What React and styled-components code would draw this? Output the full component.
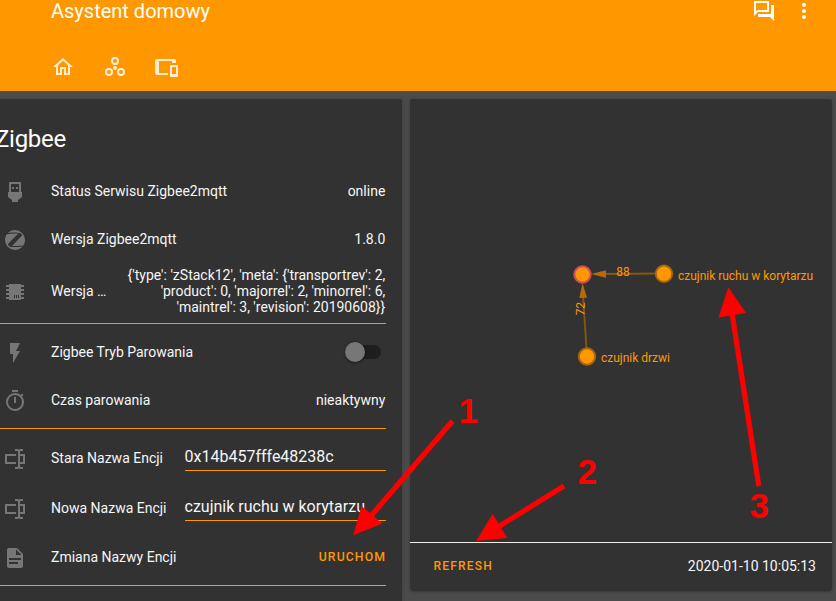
import React from 'react';
import styled, { createGlobalStyle } from 'styled-components';

const GlobalStyle = createGlobalStyle`
  * { box-sizing: border-box; }
  body { margin: 0; overflow: hidden; background: #4b4b4b; font-family: Roboto, "Noto Sans", sans-serif; color: #fff; }
`;

const Page = styled.div`
  position: relative;
  display: flex;
  flex-direction: column;
  width: 836px;
  height: 601px;
  overflow: hidden;
  background: #4b4b4b;
`;

const Header = styled.header`
  display: flex;
  flex-direction: column;
  justify-content: space-between;
  flex: none;
  height: 91px;
  background: #ff9800;
`;

const Toolbar = styled.div`
  display: flex;
  align-items: center;
  height: 23px;
  padding: 0 20px 0 51px;
`;

const AppTitle = styled.h1`
  flex: 1;
  margin: 0;
  font-size: 20px;
  font-weight: 400;
  line-height: 23px;
`;

const Actions = styled.div`
  display: flex;
  gap: 16px;
  margin-bottom: 1px;
`;

const Tabs = styled.nav`
  display: flex;
  align-items: center;
  gap: 28px;
  height: 48px;
  padding: 0 51px;
  color: rgba(255, 255, 255, 0.82);
`;

const Glyph = styled.svg`
  display: block;
  flex: none;
  width: 24px;
  height: 24px;
  fill: currentColor;
`;

const Columns = styled.main`
  display: flex;
  align-items: flex-start;
  gap: 8px;
  padding-top: 8px;
`;

const Card = styled.section`
  flex: none;
  background: #323232;
  border-radius: 2px;
  box-shadow: 0 2px 2px rgba(0, 0, 0, 0.14), 0 1px 5px rgba(0, 0, 0, 0.12), 0 3px 1px -2px rgba(0, 0, 0, 0.2);
`;

const EntitiesCard = styled(Card)`
  width: 423px;
  height: 520px;
  margin-left: -21px;
  padding: 0 16px;
`;

const CardTitle = styled.h2`
  margin: 0;
  padding: 20px 0 12px;
  font-size: 24px;
  font-weight: 400;
  line-height: 40px;
  letter-spacing: -0.29px;
`;

const EntityList = styled.div`
  display: flex;
  flex-direction: column;
  gap: 8px;
`;

const Row = styled.div`
  display: flex;
  align-items: center;
  height: ${(p) => p.$height || 40}px;
  font-size: 14px;
  line-height: 16px;
  color: #f6f6f6;
`;

const StateIcon = styled.div`
  display: flex;
  align-items: center;
  justify-content: center;
  flex: none;
  width: 40px;
  height: 40px;
  margin-right: 16px;
  padding-top: 2px;
  color: #767676;
`;

const Label = styled.div`
  flex: 1;
  white-space: nowrap;
`;

const State = styled.div`
  padding-right: 0.7px;
  text-align: right;
  white-space: pre-line;
`;

const Divider = styled.hr`
  flex: none;
  width: 100%;
  height: 1px;
  margin: 0;
  border: 0;
  background: #ff9800;
`;

const Input = styled.div`
  width: 201.5px;
  height: 27px;
  border-bottom: 1px solid #ff9800;
  font-size: 16px;
  line-height: 25px;
  margin-bottom: 1px;
  white-space: nowrap;
`;

const Switch = styled.div`
  display: flex;
  align-items: center;
  width: 36px;
  height: 14px;
  margin-right: 5px;
  border-radius: 7px;
  background: #1f1f1f;
`;

const Knob = styled.span`
  width: 20px;
  height: 20px;
  border-radius: 50%;
  background: #777;
  box-shadow: 0 1px 3px rgba(0, 0, 0, 0.5);
`;

const Action = styled.span`
  color: #ff9800;
  font-size: ${(p) => p.$size}px;
  font-weight: 500;
  letter-spacing: ${(p) => p.$spacing}px;
  line-height: 16px;
`;

const MapCard = styled(Card)`
  display: flex;
  flex-direction: column;
  width: 422px;
  height: 491px;
`;

const Network = styled.svg`
  display: block;
  flex: none;
  width: 422px;
  height: 443px;
  font-family: Roboto, sans-serif;
  font-size: 12px;
  fill: #ff9800;
`;

const MapFooter = styled.footer`
  display: flex;
  align-items: center;
  justify-content: space-between;
  height: 48px;
  padding: 0 16px 1px 23.5px;
  border-top: 1px solid #eee;
  font-size: 14px;
  color: #f6f6f6;
`;

const Annotations = styled.svg`
  position: absolute;
  inset: 0;
  width: 836px;
  height: 601px;
  pointer-events: none;
  fill: #f00;
  stroke: none;
  font: bold 35px "Liberation Sans", sans-serif;
`;

const paths = {
  home: 'M12 5.69L17 10.19V18H15V12H9V18H7V10.19L12 5.69M12 3L2 12H5V20H11V14H13V20H19V12H22',
  devices: 'M2,4H19A2,2 0 0,1 21,6V8H17V6H4V18H13V20H2A2,2 0 0,1 0,18V6A2,2 0 0,1 2,4M16,10H22A1,1 0 0,1 23,11V21A1,1 0 0,1 22,22H16A1,1 0 0,1 15,21V11A1,1 0 0,1 16,10M17,12V19H21V12H17Z',
  forum: 'M15,4V11H5.17L4,12.17V4H15M16,2H3A1,1 0 0,0 2,3V17L6,13H16A1,1 0 0,0 17,12V3A1,1 0 0,0 16,2M21,6H19V15H6V17A1,1 0 0,0 7,18H18L22,22V7A1,1 0 0,0 21,6Z',
  more: 'M12,16A2,2 0 1,1 12,20A2,2 0 1,1 12,16M12,10A2,2 0 1,1 12,14A2,2 0 1,1 12,10M12,4A2,2 0 1,1 12,8A2,2 0 1,1 12,4Z',
  usb: 'M7 2H17A1 1 0 0 1 18 3V12H19V17L15 20V22H9V20L5 17V12H6V3A1 1 0 0 1 7 2M8 4V12H16V4H8M9 7H11V9H9V7M13 7H15V9H13V7Z',
  zigbee: 'M4.06,6.15C3.97,6.17 3.88,6.22 3.8,6.28C2.66,7.9 2,9.87 2,12A10,10 0 0,0 12,22C15,22 17.68,20.68 19.5,18.6L17,18.85C14.25,19.15 11.45,19.19 8.66,18.96C7.95,18.94 7.24,18.76 6.59,18.45C5.73,18.06 5.15,17.23 5.07,16.29C5.06,16.13 5.12,16 5.23,15.87L7.42,13.6L15.1,5.7V5.6H10.84C8.57,5.64 6.31,5.82 4.06,6.15M20.17,17.5C20.26,17.47 20.35,17.44 20.43,17.39C21.42,15.83 22,14 22,12A10,10 0 0,0 12,2C9.22,2 6.7,3.13 4.89,4.97H5.17C8.28,4.57 11.43,4.47 14.56,4.65C15.5,4.64 16.45,4.82 17.33,5.17C18.25,5.53 18.89,6.38 19,7.37C19,7.53 18.93,7.7 18.82,7.82L9.71,17.19L9,17.95V18.06H13.14C15.5,18 17.84,17.81 20.17,17.5Z',
  chip: 'M6,4H18V5H21V7H18V9H21V11H18V13H21V15H18V17H21V19H18V20H6V19H3V17H6V15H3V13H6V11H3V9H6V7H3V5H6V4M11,15V18H12V15H11M13,15V18H14V15H13M15,15V18H16V15H15Z',
  flash: 'M7,2V13H10V22L17,10H13L17,2H7Z',
  timer: 'M12,20A7,7 0 0,1 5,13A7,7 0 0,1 12,6A7,7 0 0,1 19,13A7,7 0 0,1 12,20M19.03,7.39L20.45,5.97C20,5.46 19.55,5 19.04,4.56L17.62,6C16.07,4.74 14.12,4 12,4A9,9 0 0,0 3,13A9,9 0 0,0 12,22C17,22 21,17.97 21,13C21,10.88 20.26,8.93 19.03,7.39M11,14H13V8H11M15,1H9V3H15V1Z',
  textbox: 'M17,7H22V17H17V19A1,1 0 0,0 18,20H20V22H17.5C16.95,22 16,21.55 16,21C16,21.55 15.05,22 14.5,22H12V20H14A1,1 0 0,0 15,19V5A1,1 0 0,0 14,4H12V2H14.5C15.05,2 16,2.45 16,3C16,2.45 16.95,2 17.5,2H20V4H18A1,1 0 0,0 17,5V7M2,7H13V9H4V15H13V17H2V7M20,15V9H17V15H20Z',
  document: 'M13,9H18.5L13,3.5V9M6,2H14L20,8V20A2,2 0 0,1 18,22H6C4.89,22 4,21.1 4,20V4C4,2.89 4.89,2 6,2M15,18V16H6V18H15M18,14V12H6V14H18Z',
};

function Icon({ name }) {
  return (
    <Glyph viewBox="0 0 24 24">
      <path fillRule={name === 'usb' ? 'evenodd' : undefined} d={paths[name]} />
    </Glyph>
  );
}

function NodesIcon() {
  return (
    <Glyph viewBox="0 0 24 24">
      <g fill="none" stroke="currentColor" strokeWidth="2">
        <circle cx="12" cy="6" r="3" />
        <circle cx="6" cy="17" r="3" />
        <circle cx="18" cy="17" r="3" />
      </g>
      <circle cx="12" cy="13" r="2" />
    </Glyph>
  );
}

function Entity({ icon, label, height, children }) {
  return (
    <Row $height={height}>
      <StateIcon><Icon name={icon} /></StateIcon>
      <Label>{label}</Label>
      {children}
    </Row>
  );
}

function NetworkMap() {
  return (
    <Network viewBox="410 99 422 443">
      <g stroke="#8a5711" strokeWidth="1.8">
        <path d="M664 273.5L598 274" />
        <path d="M587 356L583 296" />
      </g>
      <path fill="#b8690b" d="M591 274L606 270.2V277.8Z" />
      <path fill="#b8690b" d="M582.5 283L579.3 298L587 297.8Z" />
      <circle cx="582.5" cy="274.5" r="8.2" stroke="#c94d5b" strokeWidth="2" />
      <circle cx="664" cy="273.8" r="8.2" stroke="#a8660c" strokeWidth="2" />
      <circle cx="587" cy="356.5" r="8.2" stroke="#a8660c" strokeWidth="2" />
      <text x="623" y="276" textAnchor="middle">88</text>
      <text transform="translate(584.5 309) rotate(-87)" textAnchor="middle">72</text>
      <text x="678" y="280" textLength="135">czujnik ruchu w korytarzu</text>
      <text x="601" y="362" textLength="69">czujnik drzwi</text>
    </Network>
  );
}

function Callouts() {
  return (
    <Annotations viewBox="0 0 836 601">
      <g stroke="#f00" strokeWidth="5.2">
        <path d="M452.5 421L370 517" />
        <path d="M564 486L498 527" />
        <path d="M758.8 486L732 313" />
      </g>
      <path d="M353.3 535.3L361.5 506L382.3 523.5Z" />
      <path d="M476 541L492.7 514L507.3 538Z" />
      <path d="M728.3 287.3L718.5 317.6L746.2 313Z" />
      <text x="458.5" y="422.5">1</text>
      <text x="577.5" y="483.5">2</text>
      <text x="749.5" y="517.5">3</text>
    </Annotations>
  );
}

export default function App() {
  return (
    <Page>
      <GlobalStyle />
      <Header>
        <Toolbar>
          <AppTitle>Asystent domowy</AppTitle>
          <Actions><Icon name="forum" /><Icon name="more" /></Actions>
        </Toolbar>
        <Tabs><Icon name="home" /><NodesIcon /><Icon name="devices" /></Tabs>
      </Header>
      <Columns>
        <EntitiesCard>
          <CardTitle>Zigbee</CardTitle>
          <EntityList>
            <Entity icon="usb" label="Status Serwisu Zigbee2mqtt"><State>online</State></Entity>
            <Entity icon="zigbee" label="Wersja Zigbee2mqtt"><State>1.8.0</State></Entity>
            <Entity icon="chip" label="Wersja …" height={48}>
              <State>{"{'type': 'zStack12', 'meta': {'transportrev': 2,\n'product': 0, 'majorrel': 2, 'minorrel': 6,\n'maintrel': 3, 'revision': 20190608}}"}</State>
            </Entity>
            <Divider />
            <Entity icon="flash" label="Zigbee Tryb Parowania"><Switch><Knob /></Switch></Entity>
            <Entity icon="timer" label="Czas parowania"><State>nieaktywny</State></Entity>
            <Divider />
            <Entity icon="textbox" label="Stara Nazwa Encji" height={42}><Input>0x14b457fffe48238c</Input></Entity>
            <Entity icon="textbox" label="Nowa Nazwa Encji" height={42}><Input>czujnik ruchu w korytarzu</Input></Entity>
            <Entity icon="document" label="Zmiana Nazwy Encji"><Action $size={12.25} $spacing={1.1}>URUCHOM</Action></Entity>
            <Divider />
          </EntityList>
        </EntitiesCard>
        <MapCard>
          <NetworkMap />
          <MapFooter>
            <Action $size={12} $spacing={1.2}>REFRESH</Action>
            <span>2020-01-10 10:05:13</span>
          </MapFooter>
        </MapCard>
      </Columns>
      <Callouts />
    </Page>
  );
}
